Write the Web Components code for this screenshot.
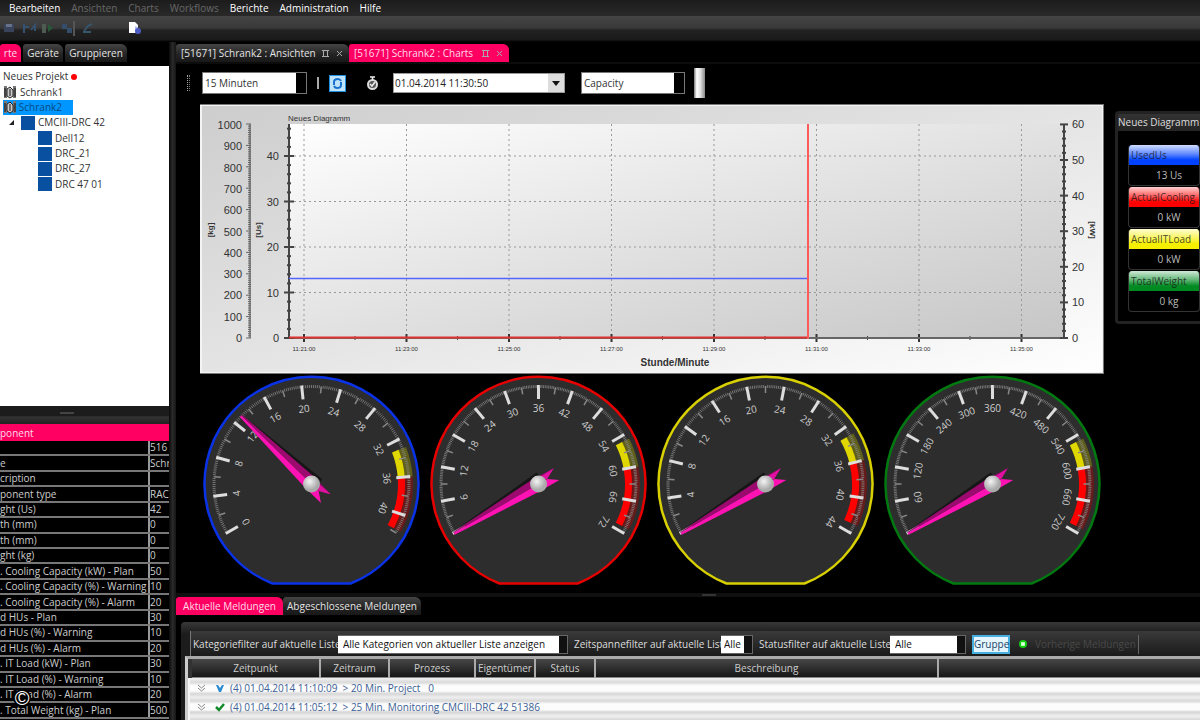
<!DOCTYPE html>
<html lang="de">
<head>
<meta charset="utf-8">
<title>Monitoring</title>
<style>
html,body{margin:0;height:100%;background:#000}
body{font-family:"Open Sans","Noto Sans",sans-serif;font-size:10px;line-height:15px;color:#ddd;overflow:hidden}
</style>
</head>
<body>
<monitor-app></monitor-app>
<script>
const RESET = `*{box-sizing:border-box}
button,select,input{font:inherit;color:inherit;margin:0;padding:0;border:0;border-radius:0;background:none;appearance:none;white-space:nowrap}
`;
function define(name, css, html){
  customElements.define(name, class extends HTMLElement{
    connectedCallback(){
      if(this.shadowRoot) return;
      const root = this.attachShadow({mode:'open'});
      root.innerHTML = '<style>' + RESET + css + '</style>' + (typeof html === 'function' ? html(this) : html);
    }
  });
}

define('menu-bar', `
:host{display:flex;height:16px;background:linear-gradient(#1c1c1c,#292929);padding-left:9px;gap:11px;color:#fff}
button{line-height:16px}
button:disabled{color:#686868}
`, `<button>Bearbeiten</button><button disabled>Ansichten</button><button disabled>Charts</button><button disabled>Workflows</button><button>Berichte</button><button>Administration</button><button>Hilfe</button>`);

define('tool-bar', `
:host{display:flex;align-items:center;height:26px;background:linear-gradient(#444,#3a3a3a 45%,#222 55%,#1b1b1b 90%,#000);padding-bottom:2px}
button{width:19px;height:18px;display:grid;place-items:center}
i{width:2px;height:15px;background:#555;margin:0 3px 0 -3px}
.doc{margin-left:28px}
`, `
<button aria-label="Speichern"><svg width="12" height="12"><path d="M0 2h10v8H0z" fill="#39435c"/><path d="M2 2h6v3H2z" fill="#67718a"/></svg></button>
<button aria-label="Start"><svg width="14" height="12"><path d="M2 2v9M2 5h5M9 8l4-5v6" stroke="#36516f" stroke-width="2" fill="none"/></svg></button>
<button aria-label="Wiedergabe"><svg width="14" height="12"><path d="M1 2h4v9H1z" fill="#4d5b52"/><path d="M7 2l5 4-5 4z" fill="#28583a"/></svg></button>
<button aria-label="Ansicht"><svg width="12" height="12"><path d="M1 2h5v5H1zM6 6h5v5H6z" fill="#344d68"/></svg></button><i></i>
<button aria-label="Verbindung"><svg width="12" height="12"><path d="M1 10h8M2 9l4-5 4-2" stroke="#36566b" stroke-width="2" fill="none"/></svg></button>
<button class="doc" aria-label="Dokument"><svg width="14" height="14"><path d="M1 1h6l3 3v8H1z" fill="#fff"/><path d="M7 5l3 1v6H7z" fill="#b8c0ee"/><circle cx="10" cy="10" r="3" fill="#4c5cc4"/></svg></button>`);

define('tab-button', `
:host{display:block;height:18px;flex:none}
button{height:18px;width:100%;padding:0 5px;display:flex;align-items:center;justify-content:space-between;gap:4px;border-radius:3px 6px 0 0;background:linear-gradient(#444,#232323 60%,#181818);color:#e4e4e4;overflow:hidden}
:host([plain]) button{justify-content:center;padding:0}
:host([active]) button{background:#ff0062;color:#ffdce8}
svg{flex:none}
`, el => `<button role="tab" aria-selected="${el.hasAttribute('active')}"><slot></slot>${el.hasAttribute('closable') ? '<svg width="23" height="9" fill="none" stroke="#aaa"><path d="M1 1.500h7M2.500 1v6M6.500 1v6M1 7.500h7M16 2l5 5M21 2l-5 5"/></svg>' : ''}</button>`);

define('tree-view', `
:host{display:block;background:#fff;color:#333;height:340px;padding:3px 0 0 3px;overflow:hidden}
ul{list-style:none;margin:0;padding:0;display:grid;grid-auto-rows:1fr;height:123px}
li{display:flex;align-items:center;gap:3px;white-space:nowrap}
.rack span{height:15px;padding-right:11px}
.sel{width:70px;background:#0096ff}
.sel span{color:#064a80}
.dot{width:6px;height:6px;border-radius:3px;background:#f00}
.box{width:14px;height:14px;background:#0a50a0;flex:none}
.l1{padding-left:6px}.l2{padding-left:35px}
`, `<ul role="tree">
<li role="treeitem">Neues Projekt <span class="dot"></span></li>
${['Schrank1','Schrank2'].map((t,i)=>`<li role="treeitem" class="rack ${i?'sel':''}"><svg width="14" height="14"><path d="M1 1h3v12H1zM10 1h3v12h-3z" fill="#777"/><path d="M4 4l3-2 3 3v6l-3 2-3-2z" fill="#ccc" stroke="#222"/><path d="M7 4v7M2 3v9M12 3v9" stroke="#111"/></svg><span>${t}</span></li>`).join('')}
<li role="treeitem" class="l1"><svg width="6" height="6"><path d="M5 0v5H0z" fill="#222"/></svg><span class="box" style="margin-left:3px"></span>CMCIII-DRC 42</li>
${['Dell12','DRC_21','DRC_27','DRC 47 01'].map(t=>`<li role="treeitem" class="l2"><span class="box"></span>${t}</li>`).join('')}
</ul>`);

define('property-grid', `
:host{display:flex;flex-direction:column;flex:1;min-height:0}
h2{margin:0;height:17px;font-size:10px;line-height:18px;font-weight:400;background:#ff0062;color:#ffdce8}
table{border-collapse:collapse;width:100%;table-layout:fixed;height:278px}
.wrap{flex:1;min-height:0}
td{padding:0;border-bottom:2px solid #777;line-height:13px;white-space:nowrap;overflow:hidden;color:#ccc}
td+td{width:20px;border-left:2px solid #999}
`, `<h2>ponent</h2><div class="wrap"><table>${[
['','516'],['e','Schr'],['cription',''],['ponent type','RAC'],['ght (Us)','42'],['th (mm)','0'],['th (mm)','0'],['ght (kg)','0'],
['. Cooling Capacity (kW) - Plan','50'],['. Cooling Capacity (%) - Warning','10'],['. Cooling Capacity (%) - Alarm','20'],
['d HUs - Plan','30'],['d HUs (%) - Warning','10'],['d HUs (%) - Alarm','20'],
['. IT Load (kW) - Plan','30'],['. IT Load (%) - Warning','10'],['. IT Load (%) - Alarm','20'],['. Total Weight (kg) - Plan','500']
].map(r=>`<tr><td>${r[0]}</td><td>${r[1]}</td></tr>`).join('')}</table></div>`);

define('chart-controls', `
:host{display:flex;align-items:center;height:40px;padding:0 0 2px 11px;color:#222}
i{flex:none;width:3px;height:16px;border-left:1px dotted #aaa;border-right:1px dotted #777}
select{height:22px;color:#333;padding-left:2px;border:1px solid #777;background:linear-gradient(90deg,#fff,#fff) left/calc(100% - 10px) 100% no-repeat #000}
.span{width:105px;margin-left:12px}
.bar{width:2px;height:12px;background:#aaa;border:0;margin:0 10px 0 10px}
.sync{width:17px;height:17px;background:#bfe3fa;border:1px solid #1f8fe0;display:grid;place-items:center}
.clock{margin:0 14px 0 20px;width:13px;height:16px;display:grid;place-items:center}
.date{display:flex;width:172px;height:20px;background:#fff;border:1px solid #999;margin-right:16px}
.date input{flex:1;min-width:0;padding-left:1px}
.date button{width:16px;background:#ddd;display:grid;place-items:center}
.cap{width:104px}
.end{width:11px;height:30px;margin-left:9px;background:linear-gradient(90deg,#777,#fff 25%,#ddd 60%,#888)}
`, `<i></i><select class="span" aria-label="Zeitraum"><option>15 Minuten</option></select><i class="bar"></i>
<button class="sync" aria-label="Aktualisieren"><svg width="13" height="13" fill="none" stroke="#1670cc" stroke-width="2"><path d="M3 8V5q0-3 4-3 2 0 3 2M10 5v3q0 3-4 3-2 0-3-2"/></svg></button>
<button class="clock" aria-label="Zeitpunkt"><svg width="13" height="15"><circle cx="6.500" cy="8.500" r="4.500" fill="#555" stroke="#ddd" stroke-width="2"/><path d="M4 1h5M6.500 1v3M4 8l2 2 3-4" stroke="#eee" stroke-width="1.500" fill="none"/></svg></button>
<span class="date"><input aria-label="Datum" value="01.04.2014 11:30:50"><button aria-label="Kalender"><svg width="8" height="5"><path d="M0 0h8L4 5z" fill="#111"/></svg></button></span>
<select class="cap" aria-label="Chart"><option>Capacity</option></select><span class="end"></span>`);

define('trend-chart', `
:host{display:block}
svg{display:block;width:100%;height:auto;font-family:"Liberation Sans",sans-serif}
`, () => {
  let s = '';
  const line = (x1,y1,x2,y2,a='stroke="#444"') => `<path d="M${x1} ${y1}L${x2} ${y2}" ${a}/>`;
  const text = (x,y,t,a='') => `<text x="${x}" y="${y}" ${a}>${t}</text>`;
  const grid = 'stroke="#999" stroke-dasharray="2 3"';
  for(let v=10; v<=40; v+=10) s += line(89,234-v*4.55,864,234-v*4.55,grid);
  [21,23,25,27,29,31,33,35].forEach((m,i)=>{
    const x = 104+i*102.5;
    s += line(x,20,x,234,grid) + line(x,230,x,238,'stroke="#333" stroke-width="2"') + text(x,247,`11:${m}:00`,'text-anchor="middle" font-size="6"');
    if(i<7) s += line(x+51,232,x+51,236);
  });
  s += line(89,234,864,234,'stroke="#666" stroke-width="2"');
  s += line(50,20,50,234) + line(89,20,89,234,'stroke="#444" stroke-width="2"') + line(864,20,864,234,'stroke="#444" stroke-width="2"');
  for(let i=0;i<=100;i++) s += line(i%10?48:46,234-i*2.14,51,234-i*2.14,'stroke="#666"');
  for(let i=0;i<=10;i++) s += text(42,238-i*21.3,i*100,'text-anchor="end"');
  for(let i=0;i<=47;i+=2) s += line(i%10?87:84,234-i*4.55,i%10?91:94,234-i*4.55,'stroke="#444" stroke-width="2"');
  for(let v=0;v<=40;v+=10) s += text(79,238-v*4.55,v,'text-anchor="end"');
  for(let v=0;v<=60;v+=2) s += line(v%10?862:860,234-v*3.56,v%10?866:868,234-v*3.56,'stroke="#444" stroke-width="2"');
  for(let v=0;v<=60;v+=10) s += text(872,238-v*3.56,v);
  s += line(89,174.5,608,174.5,'stroke="#5566ff" stroke-width="1.500"') + line(89,233.5,608,233.5,'stroke="#d33" stroke-width="2"') + line(608,20,608,235,'stroke="#ff5a5a" stroke-width="2"');
  const rot = (x,t,a) => `<text transform="translate(${x} 126) rotate(${a})" text-anchor="middle" font-size="8" font-weight="bold">${t}</text>`;
  s += rot(13,'[kg]',-90)+rot(61,'[Us]',-90)+rot(890,'[kW]',90);
  return `<svg viewBox="0 0 904 270" font-size="11" fill="#333" stroke-width="1"><defs>
<linearGradient id="o" x2="1" y2="1"><stop stop-color="#cdcdcd"/><stop offset=".5" stop-color="#e4e4e4"/><stop offset="1" stop-color="#fff"/></linearGradient>
<linearGradient id="p" x2="1" y2="1"><stop stop-color="#fff"/><stop offset=".5" stop-color="#e2e2e2"/><stop offset="1" stop-color="#c6c6c6"/></linearGradient></defs>
<path d="M0 0h904v270H0z" fill="url(#o)"/><path d="M1 1h902v268H1z" fill="none" stroke="#f4f4f4" stroke-width="2"/><path d="M0 .5h904M903.500 0v270M0 269.500h904" stroke="#777" fill="none"/>
<path d="M89 20h775v214H89z" fill="url(#p)"/>${s}
${text(88,17,'Neues Diagramm','font-size="8"')}${text(475,262,'Stunde/Minute','font-size="10" font-weight="bold" text-anchor="middle"')}</svg>`;
});

define('round-gauge', `
:host{display:block;min-width:0}
svg{display:block;width:100%;height:auto;font-family:"Open Sans",sans-serif}
`, el => {
  const max=+el.getAttribute('max'), step=+el.getAttribute('step'), val=+el.getAttribute('value'), col=el.getAttribute('color');
  const [y0,y1,r1]=el.getAttribute('zones').split(' ').map(Number);
  const ang = v => v/max*240-120;
  const pt = (r,a) => { a=(a-90)*Math.PI/180; return (r*Math.cos(a)).toFixed(2)+' '+(r*Math.sin(a)).toFixed(2); };
  const arc = (r,a,b,c,w,x='') => `<path d="M${pt(r,ang(a))}A${r} ${r} 0 0 1 ${pt(r,ang(b))}" fill="none" stroke="${c}" stroke-width="${w}" ${x}/>`;
  let t='';
  const u = step/20;
  for(let i=0;i*u<=max+.001;i++){
    const a=ang(i*u);
    t += i%20===0 ? `<path d="M${pt(99,a)}L${pt(85,a)}" stroke="#ddd" stroke-width="3"/>`
      : i%10===0 ? `<path d="M${pt(98,a)}L${pt(91,a)}" stroke="#888" stroke-width="1.500"/>`
      : `<path d="M${pt(99,a)}L${pt(96,a)}" stroke="#888" stroke-width=".8"/>`;
  }
  for(let v=0;v<=max;v+=step) if(!(v===0 && val===0)) t += `<text transform="rotate(${ang(v)}) translate(0 -72)" text-anchor="middle">${v}</text>`;
  return `<svg role="img" aria-label="${val}" viewBox="-113.500 -109 227 212"><defs><radialGradient id="h" cx=".4" cy=".35"><stop stop-color="#f4f4f4"/><stop offset="1" stop-color="#aaa"/></radialGradient></defs>
<path d="M-39 99.500A107 107 0 1 1 39 99.500z" fill="#2d2d2d" stroke="${col}" stroke-width="2.500"/>
${arc(97,y0,y1,'#aa0','9','opacity=".4"')}${arc(97,y1,r1,'#b00','9','opacity=".4"')}${arc(90,y0,y1,'#e0d600',7)}${arc(90,y1,r1,'#f00',7)}
<g font-size="10" fill="#ccc">${t}</g>
<g transform="rotate(${ang(val)})"><path d="M2 -92L11 4 4 6z" fill="#000" opacity=".5"/><path d="M-2 -98L-7 -4-7 20 0 10V-98z" fill="#ff12b4"/><path d="M0 -98H1L7 -4 6 21 0 10z" fill="#9c0a70"/><path d="M0 10L5 0 6 21z" fill="#e010a0"/></g>
<circle r="8.500" fill="url(#h)"/></svg>`;
});

define('legend-item', `
:host{display:block;height:41px;border-radius:4px;overflow:hidden;border:1px solid #333;border-top:0;background:#000}
div{height:20px;line-height:20px;padding-left:2px;color:rgba(20,20,20,.8);background:linear-gradient(#ffffffd0,#ffffff60 45%,#fff0 75%),var(--c)}
p{margin:0;line-height:20px;text-align:center;color:#bbb;width:80px}
`, el => `<div>${el.getAttribute('label')}</div><p><slot></slot></p>`);

define('chart-legend', `
:host{display:block;height:213px;border:3px solid #222;border-right:0;border-radius:4px 0 0 4px;overflow:hidden}
h2{margin:0;height:17px;font-size:10px;line-height:16px;font-weight:400;color:#ddd;background:linear-gradient(#333,#242424);white-space:nowrap}
section{display:grid;gap:1px;padding:14px 0 0 10px}
`, `<h2>Neues Diagramm</h2><section>
<legend-item label="UsedUs" style="--c:#0042ff">13 Us</legend-item>
<legend-item label="ActualCooling" style="--c:#ff0000">0 kW</legend-item>
<legend-item label="ActualITLoad" style="--c:#f6f000">0 kW</legend-item>
<legend-item label="TotalWeight" style="--c:#008a22">0 kg</legend-item></section>`);

define('message-filter', `
:host{display:flex;align-items:center;height:25px;padding-top:1px;margin-left:5px;background:linear-gradient(#3a3a3a,#1a1a1a);border-left:1px solid #777}
label{white-space:nowrap;color:#ddd;flex:none}
select{height:19px;flex:none;padding-left:5px;color:#111;border:1px solid #666;border-left:0;background:linear-gradient(90deg,#fff,#fff) left/calc(100% - 8px) 100% no-repeat #111;margin-right:6px}
select.tight{padding-left:3px}
button{height:19px;width:38px;background:#e4f5fd;border:2px solid #45b0e0;color:#246;margin:0 9px 0 0}
.prev{width:120px;border:0;border-right:1px solid #666;background:none;color:#484848;display:flex;align-items:center;gap:8px;margin:0}
.prev::before{content:"";width:8px;height:8px;border-radius:4px;background:radial-gradient(#fff,#9f9 40%,#1c1c1c00 41%),#1c1;flex:none}
`, `<label for="k" style="width:147px;padding-left:2px">Kategoriefilter auf aktuelle Liste</label><select id="k" style="width:230px"><option>Alle Kategorien von aktueller Liste anzeigen</option></select>
<label for="z" style="width:147px">Zeitspannefilter auf aktuelle Liste</label><select id="z" class="tight" style="width:32px"><option>Alle</option></select>
<label for="s" style="width:131px">Statusfilter auf aktuelle Liste</label><select id="s" style="width:76px"><option>Alle</option></select>
<button>Gruppe</button><button class="prev" disabled>Vorherige Meldungen</button>`);

define('message-table', `
:host{display:block;flex:1;background:#f4f4f4;border-top:3px solid #aaa;border-left:3px solid #ccc;overflow:hidden;min-height:0}
table{border-collapse:collapse;width:100%;table-layout:fixed}
th{height:18px;padding:0;background:linear-gradient(#474747,#161616);border-right:2px solid #aaa;color:#ccc;font-weight:400;line-height:18px}
th:last-child{border:0}
thead{border-bottom:1px solid #888;border-left:4px solid #333}
td{height:19px;padding:0 0 0 7px;line-height:15px;color:#3c5f96;white-space:nowrap;background:linear-gradient(#f0f0f0,#d8d8d8 4px,#fdfdfd 7px,#fbfbfb 13px,#d4d4d4 15px,#f0f0f0)}
span{display:flex;align-items:center;gap:4px;height:15px;padding-top:3px}
`, `<table><colgroup><col style="width:130px"><col style="width:69px"><col style="width:86px"><col style="width:60px"><col style="width:60px"><col style="width:343px"><col></colgroup>
<thead><tr><th>Zeitpunkt</th><th>Zeitraum</th><th>Prozess</th><th>Eigentümer</th><th>Status</th><th>Beschreibung</th><th></th></tr></thead>
<tbody><tr><td colspan="7"><span><svg width="9" height="9" fill="none" stroke="#888"><path d="M1 1l3.500 3L8 1M1 4l3.500 3L8 4"/></svg><svg style="margin-left:4px" width="12" height="10"><path d="M2 1h2l2 3 2-3h2L7 8H5z" fill="#2a8bd0"/></svg>(4) 01.04.2014 11:10:09 &nbsp;&gt; 20 Min. Project &nbsp; 0</span></td></tr>
<tr><td colspan="7"><span><svg width="9" height="9" fill="none" stroke="#888"><path d="M1 1l3.500 3L8 1M1 4l3.500 3L8 4"/></svg><svg style="margin-left:4px" width="12" height="10" fill="none" stroke="#128a2a" stroke-width="2.500"><path d="M2 4l3 3 5-6"/></svg>(4) 01.04.2014 11:05:12 &nbsp;&gt; 25 Min. Monitoring CMCIII-DRC 42 51386</span></td></tr>
<tr><td colspan="7"></td></tr></tbody></table>`);

define('monitor-app', `
:host{display:flex;flex-direction:column;height:100vh;background:#000}
.main{flex:1;min-height:0;display:grid;grid-template-columns:169px 7px minmax(0,1fr)}
.left{display:flex;flex-direction:column;min-height:0;min-width:0}
.tabs{display:flex;gap:2px;padding-top:2px;height:24px;flex:none}
.hs{height:18px;flex:none;background:linear-gradient(#1c1c1c 55%,#333 60%,#222);padding:6px 0 0 60px}
.hs::before{content:"";display:block;width:14px;height:2px;background:#444}
.vs{background:linear-gradient(90deg,#0a0a0a,#2a2a2a 50%,#161616)}
.right{display:flex;flex-direction:column;min-width:0;min-height:0}
.right>.tabs{gap:0;height:22px;border-bottom:2px solid #0c0c0c}
.work{display:grid;grid-template-columns:minmax(0,1fr) 85px;gap:11px;padding-left:24px;flex:none}
chart-legend{margin-top:7px}
.gauges{display:grid;grid-template-columns:repeat(4,minmax(0,1fr));margin:1px -2px 0}
.split{flex:none;height:4px;margin-top:6px;background:#101010;padding:1px 0 0 526px}
.split::before{content:"";display:block;width:14px;height:2px;background:#333}
.msgs{flex:1;min-height:0;display:flex;flex-direction:column;margin-left:5px;padding:9px 0 0 4px;background:linear-gradient(#383838,#1c1c1c 12px);border-radius:4px 0 0 0}
.right>.bottom{height:25px;padding:0;border:0}
.mark{position:absolute;left:13px;bottom:13px;width:18px;height:18px;border-radius:9px;background:#000;color:#fff;font:20px/18px "Liberation Sans",sans-serif;text-align:center}
`, `
<menu-bar></menu-bar><tool-bar></tool-bar>
<div class="main">
<div class="left">
 <div class="tabs"><tab-button active plain style="width:21px">rte</tab-button><tab-button plain style="width:40px">Geräte</tab-button><tab-button plain style="width:62px">Gruppieren</tab-button></div>
 <tree-view></tree-view><div class="hs"></div><property-grid></property-grid>
</div>
<div class="vs"></div>
<div class="right">
 <div class="tabs"><tab-button closable style="width:173px">[51671] Schrank2 : Ansichten</tab-button><tab-button active closable style="width:160px">[51671] Schrank2 : Charts</tab-button></div>
 <chart-controls></chart-controls>
 <div class="work"><div><trend-chart></trend-chart>
 <div class="gauges">
  <round-gauge max="42" step="4" value="13" color="#0a32e6" zones="33 36 41.700"></round-gauge>
  <round-gauge max="72" step="6" value="0" color="#e60000" zones="55 60 71"></round-gauge>
  <round-gauge max="44" step="4" value="0" color="#d8d000" zones="33 36 43"></round-gauge>
  <round-gauge max="720" step="60" value="0" color="#007a10" zones="550 600 710"></round-gauge>
 </div></div>
 <chart-legend></chart-legend></div>
 <div class="split"></div>
 <div class="tabs bottom"><tab-button active plain style="width:107px">Aktuelle Meldungen</tab-button><tab-button plain style="width:138px">Abgeschlossene Meldungen</tab-button></div>
 <div class="msgs"><message-filter></message-filter><message-table></message-table></div>
</div></div>
<span class="mark">©</span>`);
</script>
</body>
</html>
